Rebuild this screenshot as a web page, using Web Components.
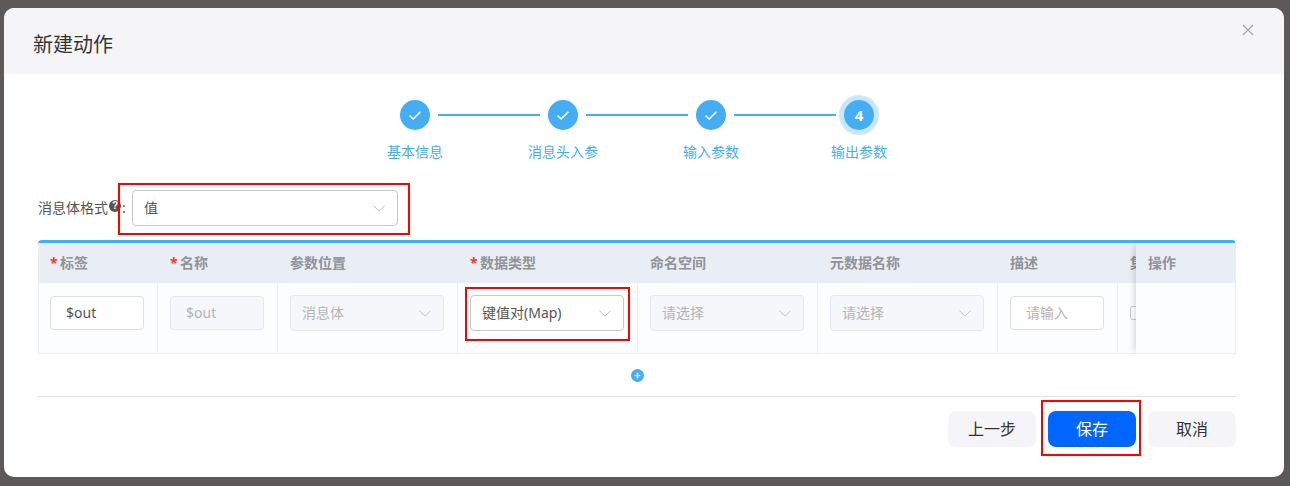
<!DOCTYPE html>
<html lang="zh-CN">
<head>
<meta charset="utf-8">
<title>新建动作</title>
<style>
html,body{margin:0;padding:0;height:486px;overflow:hidden}
body{background:#5d5958;font-family:"Noto Sans","Noto Sans CJK SC",sans-serif;font-size:14px;color:#555}
</style>
</head>
<body>
<app-dialog heading="新建动作">
  <step-bar>
    <step-item done first>基本信息</step-item>
    <step-item done>消息头入参</step-item>
    <step-item done>输入参数</step-item>
    <step-item num="4" active last>输出参数</step-item>
  </step-bar>
  <format-row>
    <ui-select style="width:266px" value="值"><red-mark style="left:-15px;right:-13px;top:-8px;bottom:-10px"></red-mark></ui-select>
  </format-row>
  <param-table>
    <th-cell required>标签</th-cell>
    <th-cell required>名称</th-cell>
    <th-cell>参数位置</th-cell>
    <th-cell required>数据类型</th-cell>
    <th-cell>命名空间</th-cell>
    <th-cell>元数据名称</th-cell>
    <th-cell>描述</th-cell>
    <th-cell>集合</th-cell>
    <td-cell first><ui-input value="$out"></ui-input></td-cell>
    <td-cell><ui-input value="$out" disabled></ui-input></td-cell>
    <td-cell><ui-select value="消息体" disabled></ui-select></td-cell>
    <td-cell><ui-select value="键值对(Map)"><red-mark style="left:-6px;right:-7px;top:-9px;bottom:-11px"></red-mark></ui-select></td-cell>
    <td-cell><ui-select value="请选择" disabled></ui-select></td-cell>
    <td-cell><ui-select value="请选择" disabled></ui-select></td-cell>
    <td-cell><ui-input placeholder="请输入"></ui-input></td-cell>
    <td-cell><ui-check></ui-check></td-cell>
    <span slot="fixed-head">操作</span>
  </param-table>
  <add-row></add-row>
  <dialog-footer>
    <ui-button>上一步</ui-button>
    <ui-button primary>保存<red-mark style="left:-7px;right:-5px;top:-11px;bottom:-9px"></red-mark></ui-button>
    <ui-button>取消</ui-button>
  </dialog-footer>
</app-dialog>
<script>
function def(name, css, html, init){
  customElements.define(name, class extends HTMLElement{
    constructor(){super();this.attachShadow({mode:'open'});}
    connectedCallback(){
      const a=n=>this.getAttribute(n);
      this.shadowRoot.innerHTML='<style>'+css+'</style>'+(typeof html==='function'?html(a,this):html);
    }
  });
}
const chevron='<svg width="12" height="7" viewBox="0 0 12 7" fill="none"><path d="M.5.7 6 6.2 11.5.7" stroke="#bdbdbd" stroke-width="1"/></svg>';
const check='<svg width="14" height="11" viewBox="0 0 14 11" fill="none"><path d="M1.6 5.6 5.2 9 12.4 1.8" stroke="#fff" stroke-width="1.6"/></svg>';

def('app-dialog',`
  :host{display:flex;flex-direction:column;box-sizing:border-box;width:1280px;height:469px;margin:8px 0 0 4px;background:#fff;border-radius:10px;overflow:hidden}
  header{flex:none;height:66px;box-sizing:border-box;background:#f5f5f7;display:flex;justify-content:space-between;padding:0 30px 0 29px}
  h1{margin:0;padding-top:23px;font-size:20px;line-height:28px;font-weight:400;color:#333}
  svg{margin-top:16px}
  main{flex:1;display:flex;flex-direction:column;padding:26px 48px 0 34px}
`,a=>`<header><h1>${a('heading')}</h1><svg width="12" height="12" viewBox="0 0 12 12" fill="none"><path d="M1 1 11 11M11 1 1 11" stroke="#a3a3af" stroke-width="1.1"/></svg></header><main><slot></slot></main>`);

def('step-bar',`:host{display:flex;justify-content:center;padding-right:0}`,'<slot></slot>');

def('step-item',`
  :host{display:flex;flex-direction:column;align-items:center;width:148px;color:#45adf3;font-size:14px;line-height:20px;white-space:nowrap}
  .top{display:flex;align-items:center;gap:8px;width:100%;height:30px;margin-bottom:12px}
  .line{flex:1;height:2px;background:#45adf3}
  .line.off{background:transparent}
  .dot{flex:none;width:30px;height:30px;border-radius:50%;background:#45adf3;color:#fff;display:flex;align-items:center;justify-content:center;font:700 15px/1 "Noto Sans",sans-serif}
  .dot.active{box-shadow:0 0 1px 5px #c9e6fb}
`,(a,el)=>`<div class="top"><span class="line ${el.hasAttribute('first')?'off':''}"></span><span class="dot ${el.hasAttribute('active')?'active':''}">${el.hasAttribute('done')?check:a('num')}</span><span class="line ${el.hasAttribute('last')?'off':''}"></span></div><slot></slot>`);

def('format-row',`
  :host{display:flex;align-items:center;margin-top:28px;height:36px}
  .l{width:94px;display:flex;align-items:center;line-height:20px;color:#555;white-space:nowrap}
  .q{flex:none;width:12px;height:12px;border-radius:50%;background:#555;color:#fff;font:700 10px/12px "Liberation Sans",sans-serif;text-align:center;margin:-4px 1px 0 1px}
`,`<span class="l">消息体格式<span class="q">?</span>:</span><slot></slot>`);

def('ui-select',`
  :host{display:block;position:relative;box-sizing:border-box;height:36px;border:1px solid #c8c8c8;border-radius:4px;background:#fff;color:#555;line-height:34px;padding:0 12px 0 11px;font-size:14px}
  :host([disabled]){background:#f5f7fa;border-color:#e4e7ed;color:#b4b4b4}
  .w{display:flex;justify-content:space-between;align-items:center;height:100%}
  span{white-space:nowrap}
`,a=>`<div class="w"><span>${a('value')}</span>${chevron}</div><slot></slot>`);

def('ui-input',`
  :host{display:block;box-sizing:border-box;height:34px;margin-top:1px;border:1px solid #dcdfe6;border-radius:4px;background:#fff;color:#555;line-height:32px;padding-left:15px;font-size:14px}
  :host([disabled]){background:#f5f7fa;border-color:#e4e7ed;color:#b4b4b4}
  .p{color:#b4b4b4}
`,a=>a('value')?`<span>${a('value')}</span>`:`<span class="p">${a('placeholder')}</span>`);

def('ui-check',`:host{display:block;box-sizing:border-box;width:14px;height:14px;margin-top:11px;border:1px solid #c8c8c8;border-radius:3px;background:#fff}`,'');

def('param-table',`
  :host{display:flex;border-top:3px solid #45adf3;border-right:1px solid #e9edf4;border-radius:4px 4px 0 0;margin-top:14px;height:114px;box-sizing:border-box;overflow:hidden;background:#fcfdff}
  .scroll{width:1098px;flex:none;overflow:hidden}
  .grid{display:grid;grid-template-columns:120px 120px 180px 180px 180px 180px 120px 120px;grid-template-rows:40px 71px;width:1220px}
  .fixed{flex:1;position:relative;box-shadow:-5px 0 6px -3px rgba(0,0,0,.14);display:grid;grid-template-rows:40px 71px}
  .fh{background:#e9edf4;color:#909399;font-weight:700;line-height:40px;padding-left:12px}
  .fb{background:#fcfdff;border-bottom:1px solid #e9edf4}
`,`<div class="scroll"><div class="grid"><slot></slot></div></div><div class="fixed"><div class="fh"><slot name="fixed-head"></slot></div><div class="fb"></div></div>`);

def('th-cell',`
  :host{display:block;background:#e9edf4;color:#909399;font-weight:700;line-height:40px;padding-left:12px;white-space:nowrap;overflow:hidden}
  b{color:#f33;font-weight:700;display:inline-block;width:10px;font-size:14px}
`,(a,el)=>`${el.hasAttribute('required')?'<b>*</b>':''}<slot></slot>`);

def('td-cell',`
  :host{display:block;box-sizing:border-box;padding:12px 13px 0 12px;background:#fcfdff;border-right:1px solid #e9edf4;border-bottom:1px solid #e9edf4}
  :host([first]){box-shadow:inset 1px 0 0 #e9edf4}
`,'<slot></slot>');

def('add-row',`
  :host{display:flex;justify-content:center;align-items:center;height:42px;border-bottom:1px solid #e3e3e3;box-sizing:content-box;height:42px}
  svg{display:block}
`,`<svg width="13" height="13" viewBox="0 0 13 13"><circle cx="6.5" cy="6.5" r="6.5" fill="#45adf3"/><path d="M6.5 3.5v6M3.5 6.5h6" stroke="#c6e6fd" stroke-width="1.6"/></svg>`);

def('dialog-footer',`:host{display:flex;justify-content:flex-end;gap:12px;margin-top:14px}`,'<slot></slot>');

def('ui-button',`
  :host{display:block;position:relative;width:88px;height:36px;border-radius:8px;background:#f5f5f7;color:#333;font-size:16px;line-height:36px;text-align:center}
  :host([primary]){background:#0066ff;color:#fff}
`,'<slot></slot>');

def('red-mark',`:host{display:block;position:absolute;border:2px solid #f00;box-sizing:border-box;pointer-events:none;z-index:2}`,'');
</script>
</body>
</html>
